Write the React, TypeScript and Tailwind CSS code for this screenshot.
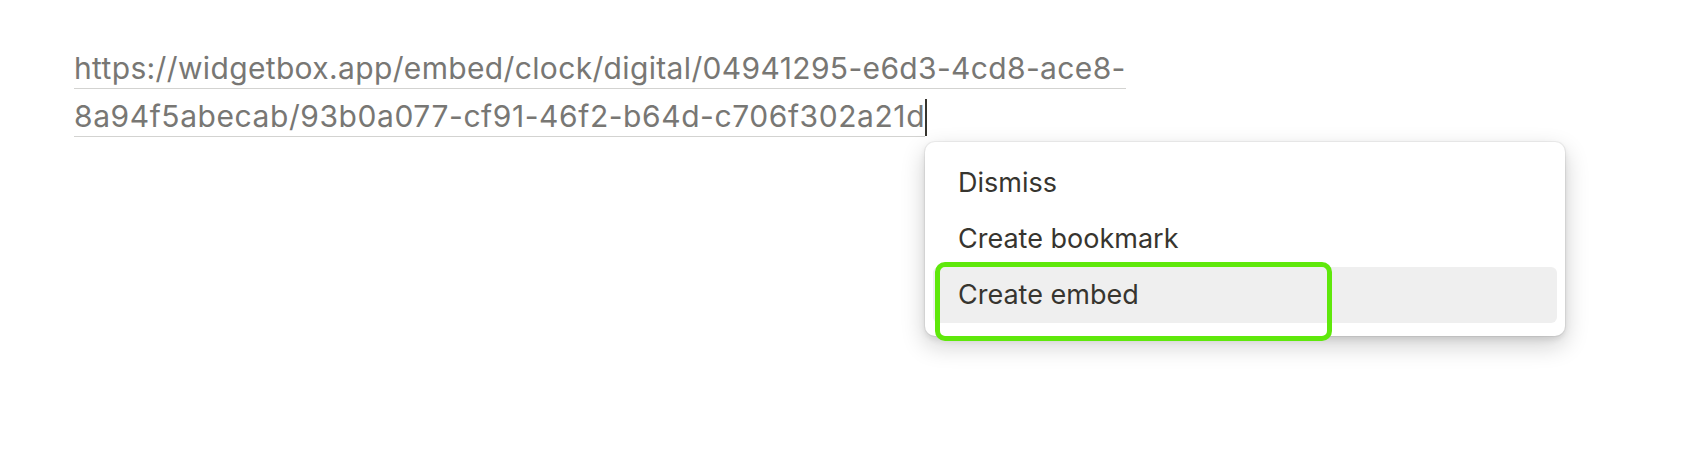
export default function App() {
  const items = ["Dismiss", "Create bookmark", "Create embed"];
  return (
    <div className="relative w-[1686px] h-[468px] overflow-hidden bg-white font-['Inter','Liberation_Sans',sans-serif]">
      <div className="pl-[74px] pt-[44px] text-[30px] leading-[48px] text-[#787774] tracking-[0.35px]">
        <span className="border-b border-[#d3d3d1] pb-[2px]">
          https://widgetbox.app/embed/clock/digital/04941295-e6d3-4cd8-ace8-
          <br />
          <span className="tracking-[0.57px]">8a94f5abecab/93b0a077-cf91-46f2-b64d-c706f302a21d</span>
        </span>
        <span className="inline-block w-[2px] h-[37px] bg-[#37352f] align-[-9px]"></span>
      </div>

      <div className="absolute left-[925px] top-[142px] w-[640px] rounded-[10px] bg-white py-[13px] px-[8px] shadow-[0_0_0_1px_rgba(15,15,15,0.05),0_3px_6px_rgba(15,15,15,0.1),0_9px_24px_rgba(15,15,15,0.2)]">
        {items.map((item, i) => (
          <div
            key={item}
            className={
              "h-[56px] flex items-center pl-[25px] rounded-[6px] text-[27px] text-[#37352f] " +
              (i === 2 ? "bg-[#efefef]" : "")
            }
          >
            {item}
          </div>
        ))}
        <div className="absolute left-[10px] top-[120px] w-[397px] h-[79px] rounded-[10px] border-[5px] border-[#5fe80b]"></div>
      </div>
    </div>
  );
}
